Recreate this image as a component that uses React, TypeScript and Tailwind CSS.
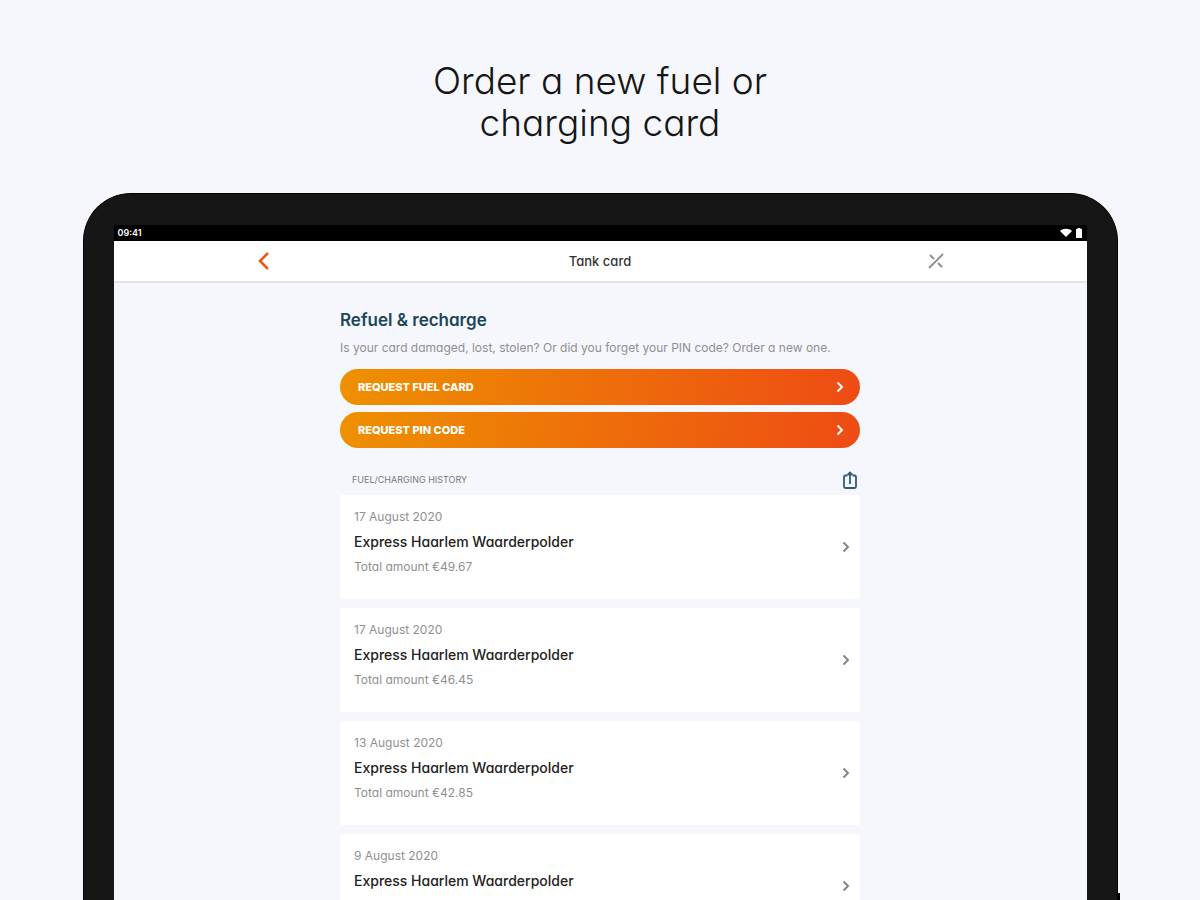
type Fueling = { date: string; station: string; amount?: string };

const fuelings: Fueling[] = [
  { date: "17 August 2020", station: "Express Haarlem Waarderpolder", amount: "€49.67" },
  { date: "17 August 2020", station: "Express Haarlem Waarderpolder", amount: "€46.45" },
  { date: "13 August 2020", station: "Express Haarlem Waarderpolder", amount: "€42.85" },
  { date: "9 August 2020", station: "Express Haarlem Waarderpolder" },
];

function Chevron({ className }: { className: string }) {
  return (
    <svg className={className} viewBox="0 0 8 12" fill="none" stroke="currentColor" strokeWidth="2" aria-hidden="true">
      <path d="M1.5 1.5 6 6l-4.5 4.5" />
    </svg>
  );
}

function StatusBar() {
  return (
    <div className="flex h-4 shrink-0 items-center justify-between bg-black px-1 text-white">
      <span className="text-[9px] leading-4 font-semibold">09:41</span>
      <svg className="h-3 w-6" viewBox="0 0 24 12" fill="currentColor" aria-hidden="true">
        <path d="M1 4C4 1 10 1 13 4L7 10Z" />
        <path d="M17 2h1.500V1h3v1H23v9h-6Z" />
      </svg>
    </div>
  );
}

function RequestButton({ label }: { label: string }) {
  return (
    <button
      type="button"
      className="flex h-9 w-full items-center justify-between rounded-full bg-[linear-gradient(100deg,#ee9100,#ee4b14)] pr-4 pl-[18px] text-[11px] leading-4 font-extrabold text-white"
    >
      {label}
      <Chevron className="h-3 w-2" />
    </button>
  );
}

export default function App() {
  return (
    <div className="flex h-screen flex-col overflow-hidden bg-[#f5f7fc] font-['Inter','Liberation_Sans',sans-serif] [font-feature-settings:'cv11']">
      <h1 className="shrink-0 pt-[60px] pb-[49px] text-center text-[37px] leading-[42px] font-light text-[#161616]">
        Order a new fuel or
        <br />
        charging card
      </h1>

      <div className="relative mx-auto flex min-h-0 w-[86.25%] flex-1 flex-col rounded-t-[48px] border-x border-t border-black bg-[#161616] px-[30px] pt-[31px]">
        <span className="absolute -right-[3px] bottom-0 h-[7px] w-[3px] bg-black" />
        <div className="flex min-h-0 flex-1 flex-col overflow-hidden bg-[#f5f7fc]">
          <StatusBar />
          <header className="h-[42px] shrink-0 border-b-2 border-[#e4e4e6] bg-white">
            <div className="mx-auto flex h-10 w-[688px] max-w-full items-center justify-between">
              <button type="button" aria-label="Back" className="text-[#e95a13]">
                <svg className="h-5 w-4" viewBox="0 0 16 20" fill="none" stroke="currentColor" strokeWidth="2.6" aria-hidden="true">
                  <path d="M12 2 4 10l8 8" />
                </svg>
              </button>
              <h2 className="text-[13px] leading-4 font-medium text-[#333]">Tank card</h2>
              <button type="button" aria-label="Close" className="text-[#8c8c8c]">
                <svg className="size-4" viewBox="0 0 16 16" fill="none" stroke="currentColor" strokeWidth="1.8" aria-hidden="true">
                  <path d="M1 15 15 1M2 2l4 4M10 10l4 4" />
                </svg>
              </button>
            </div>
          </header>

          <main className="mx-auto w-[520px] max-w-full pt-[25px]">
            <h3 className="text-[17px] leading-6 font-semibold text-[#1b4559]">Refuel &amp; recharge</h3>
            <p className="mt-2 text-[12px] leading-4 text-[#8f8f92]">
              Is your card damaged, lost, stolen? Or did you forget your PIN code? Order a new one.
            </p>
            <div className="mt-[13px] flex flex-col gap-[7px]">
              <RequestButton label="REQUEST FUEL CARD" />
              <RequestButton label="REQUEST PIN CODE" />
            </div>

            <div className="mt-[22px] flex h-5 items-center justify-between pr-[3px] pl-3">
              <h4 className="text-[9px] leading-4 text-[#77797c]">FUEL/CHARGING HISTORY</h4>
              <button type="button" aria-label="Share history" className="text-[#315b70]">
                <svg className="h-[18px] w-[14px]" viewBox="0 0 14 18" fill="none" stroke="currentColor" strokeWidth="1.8" aria-hidden="true">
                  <path d="M4.5 4.500H2.500Q1 4.500 1 6V15.500Q1 17 2.500 17H11.500Q13 17 13 15.500V6Q13 4.500 11.500 4.500H9.500" />
                  <path d="M7 13V2M4.500 4 7 1.500 9.500 4" />
                </svg>
              </button>
            </div>

            <ul className="mt-[5px] flex flex-col gap-[9px]">
              {fuelings.map((item, i) => (
                <li key={i}>
                  <a href="#fueling" className="flex h-[104px] items-center justify-between rounded-xs bg-white pr-[10px] pl-[14px]">
                    <div className="h-full pt-[14px]">
                      <p className="text-[12px] leading-4 text-[#8f8f92]">{item.date}</p>
                      <p className="mt-[7px] text-[14px] leading-5 font-medium text-[#222]">{item.station}</p>
                      {item.amount && (
                        <p className="mt-[5px] text-[12px] leading-5 text-[#8f8f92]">Total amount {item.amount}</p>
                      )}
                    </div>
                    <Chevron className="h-3 w-2 text-[#858585]" />
                  </a>
                </li>
              ))}
            </ul>
          </main>
        </div>
      </div>
    </div>
  );
}
